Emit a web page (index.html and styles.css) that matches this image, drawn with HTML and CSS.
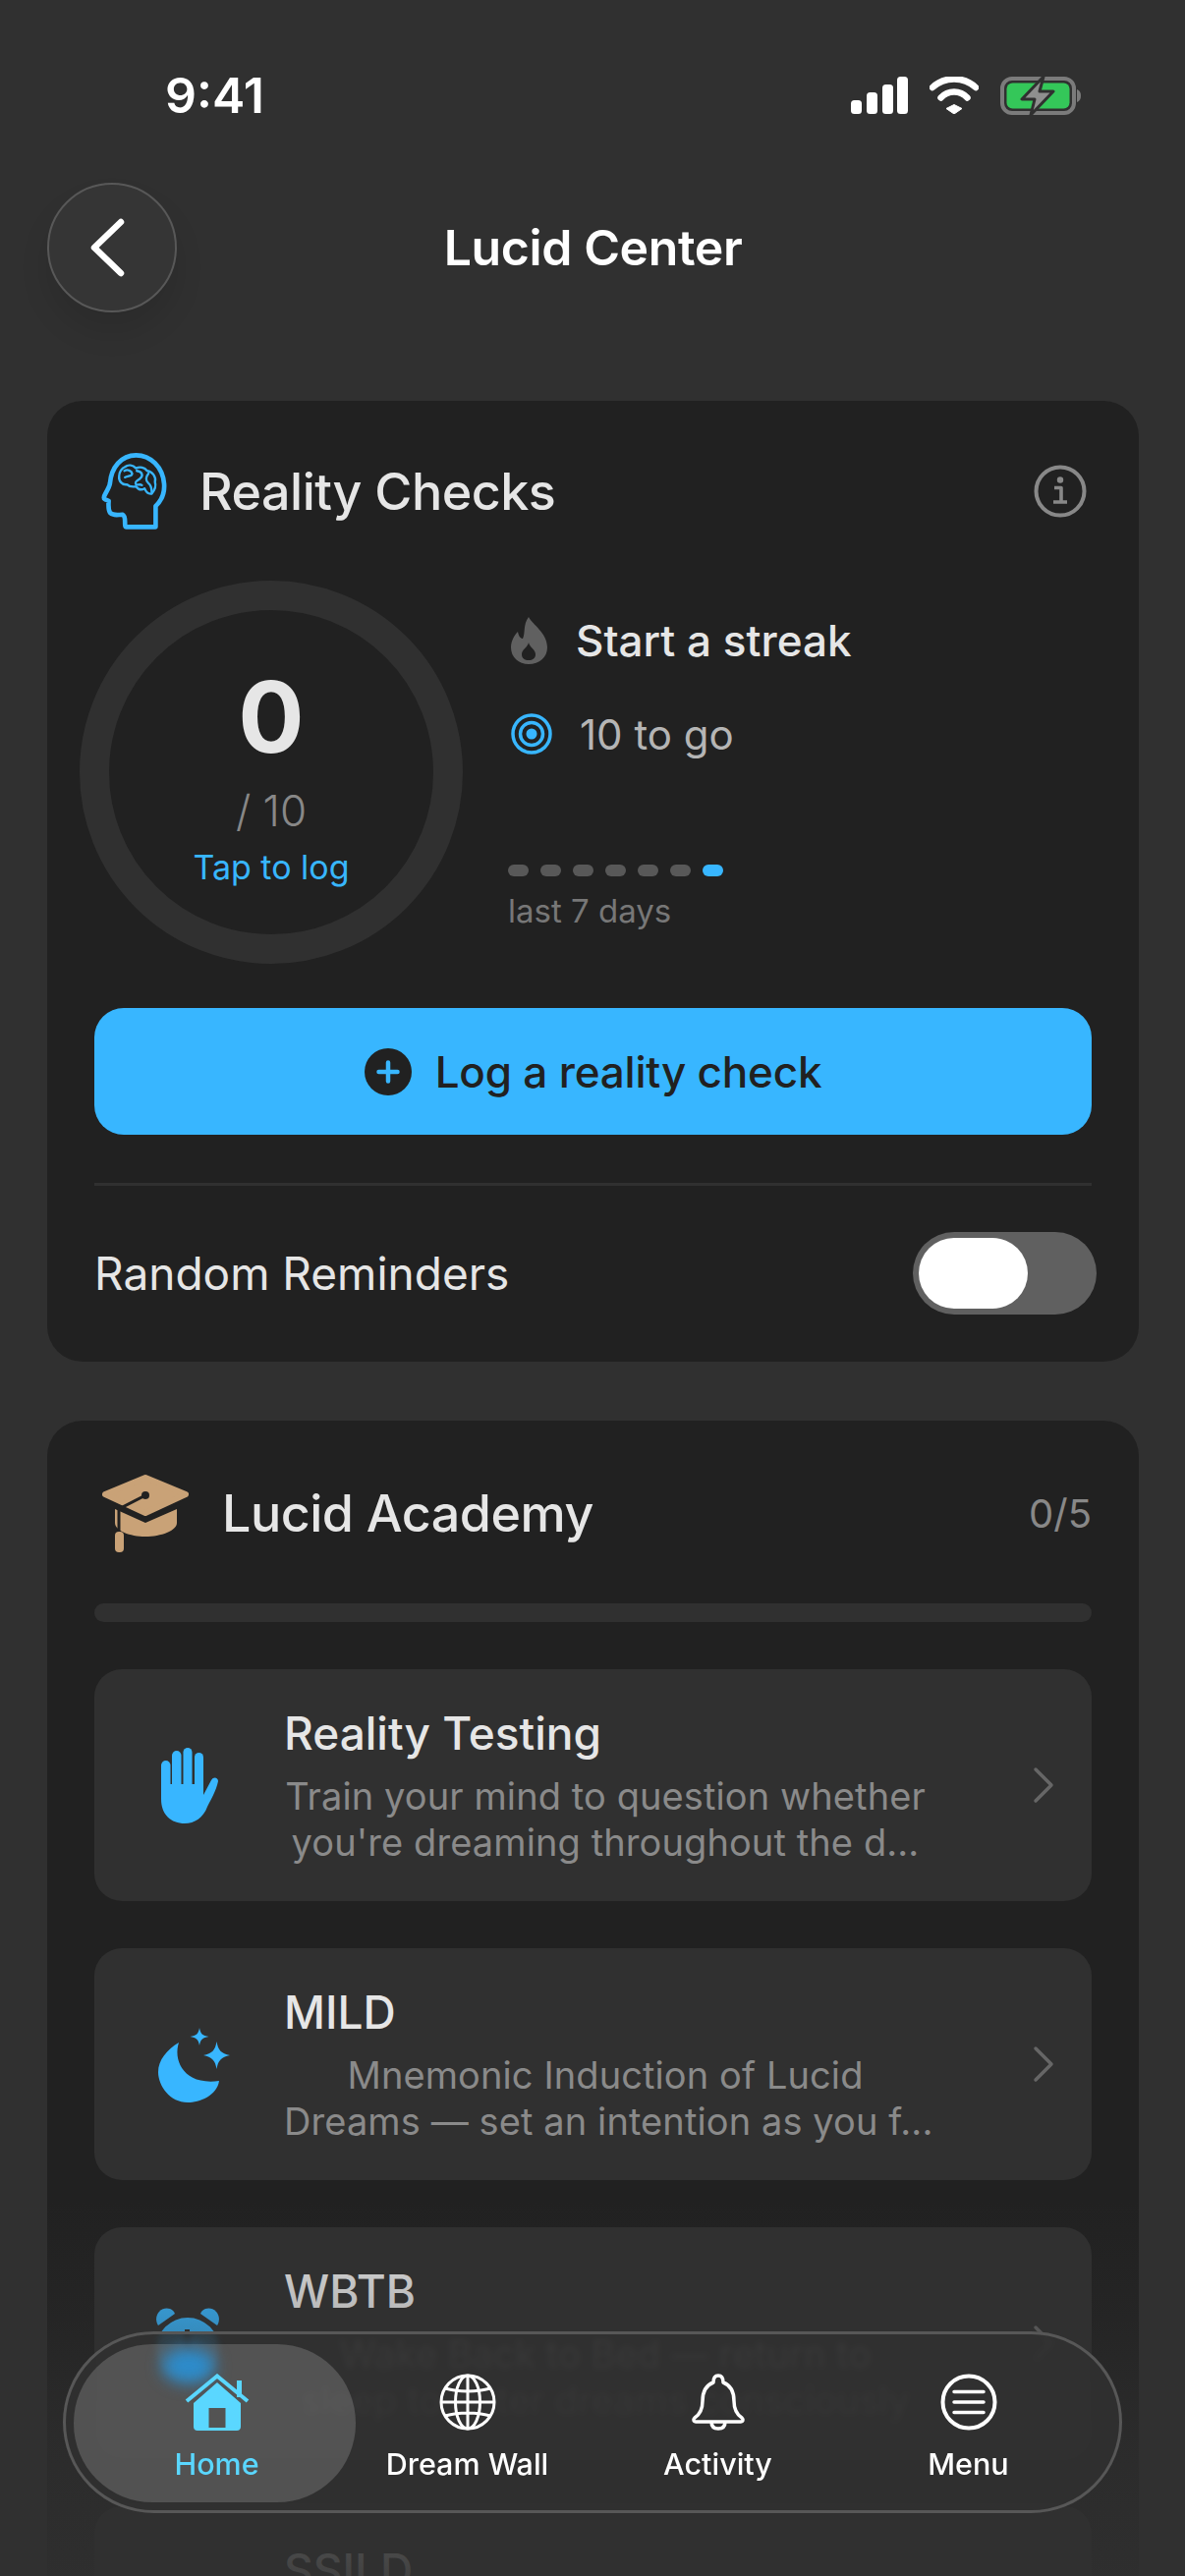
FILE: index.html
```html
<!DOCTYPE html>
<html lang="en">
<head>
    <meta charset="UTF-8">
    <meta name="viewport" content="width=device-width, initial-scale=1.0">
    <title>Lucid Center</title>
    <link rel="stylesheet" href="styles.css">
</head>
<body>
    <div class="screen">
        <div class="status">
            <span class="time">9:41</span>
            <div class="status-icons">
                <svg class="ic-signal" viewBox="0 0 58 38"><rect x="0" y="24" width="11" height="14" rx="3.5"/><rect x="16" y="16" width="11" height="22" rx="3.5"/><rect x="32" y="8" width="11" height="30" rx="3.5"/><rect x="47" y="0" width="11" height="38" rx="3.5"/></svg>
                <svg class="ic-wifi" viewBox="0 0 50 38"><path d="M25 28.5L33 32.500 25 38 17 32.500Z" stroke="#fff" stroke-width="1" stroke-linejoin="round"/><path d="M11.500 21.500C19 13.500 31 13.500 38.500 21.500" fill="none" stroke="#fff" stroke-width="6.500" stroke-linecap="round"/><path d="M3 11C15 -0.500 35 -0.500 47 11" fill="none" stroke="#fff" stroke-width="6.500" stroke-linecap="round"/></svg>
                <svg class="ic-battery" viewBox="0 0 82 41"><rect x="2" y="3" width="73" height="35" rx="10" fill="none" stroke="#7b7b7b" stroke-width="4"/><rect x="6.500" y="7.500" width="64" height="26" rx="6" fill="#34c759"/><path d="M78 14C81 15 82 17.500 82 20.500C82 23.500 81 26 78 27Z" fill="#7b7b7b"/><path d="M44 1L22 24H35L31 40L54 16H40Z" fill="#8f8f8f" stroke="#303030" stroke-width="3" stroke-linejoin="round"/></svg>
            </div>
        </div>

        <div class="topbar">
            <button class="back">
                <svg viewBox="0 0 36 60"><path d="M32 4L5 30L32 56" fill="none" stroke="#fff" stroke-width="6.500" stroke-linecap="round" stroke-linejoin="round"/></svg>
            </button>
            <h1 class="page-title">Lucid Center</h1>
        </div>

        <section class="card">
            <div class="card-head">
                <svg class="ic-brain" viewBox="40 35 200 235">
                    <path d="M116 262H206V198C225 180 234 158 232 130C228 78 190 42 146 42C100 42 70 80 66 128C65 136 60 146 52 160C46 170 46 176 52 178L62 182C61 196 61 210 66 218C72 226 84 226 104 224C110 226 112 236 112 248C112 256 112 262 116 262Z" fill="none" stroke="#38b6ff" stroke-width="14" stroke-linejoin="round"/>
                    <path d="M112 78C122 70 136 72 146 82C158 76 172 80 180 90C196 92 208 108 204 124C208 136 202 150 194 160C184 162 176 154 172 144C162 150 152 146 146 138C134 140 124 138 118 132C104 134 92 122 94 106C94 94 102 82 112 78Z" fill="none" stroke="#38b6ff" stroke-width="7" stroke-linejoin="round"/>
                    <path d="M110 90C120 84 132 90 134 98C134 108 120 104 112 110M148 90C164 92 170 104 158 114C150 120 140 122 146 132C152 134 158 130 164 134M184 98C176 108 174 120 184 128C192 134 194 146 194 156" fill="none" stroke="#38b6ff" stroke-width="7" stroke-linejoin="round" stroke-linecap="round"/>
                </svg>
                <h2 class="rc-title">Reality Checks</h2>
                <svg class="ic-info" viewBox="0 0 54 54"><circle cx="27" cy="27" r="24.500" fill="none" stroke="#888" stroke-width="4"/><circle cx="27" cy="15.500" r="3.200" fill="#888"/><path d="M21 23.500H28V37M20 38H34" fill="none" stroke="#888" stroke-width="3.600" stroke-linejoin="round"/></svg>
            </div>

            <div class="stats">
                <div class="ring">
                    <span class="ring-count">0</span>
                    <span class="ring-total">/ 10</span>
                    <span class="ring-tap">Tap to log</span>
                </div>
                <div class="stats-side">
                    <div class="streak">
                        <svg class="ic-flame" viewBox="0 0 37 48"><path fill-rule="evenodd" d="M18 0C22 8 37 16 37 31C37 41 29 48 18 48C8 48 0 41 0 31C0 24 4 18 7 15C8 20 10 22 12 22C15 16 12 8 18 0ZM18 26C19 31 25 33 25 38C25 42 22 44 18 44C14 44 11 42 11 38C11 33 17 31 18 26Z" fill="#606060"/></svg>
                        <span>Start a streak</span>
                    </div>
                    <div class="togo">
                        <svg class="ic-target" viewBox="0 0 42 42"><circle cx="21" cy="21" r="19" fill="none" stroke="#38b6ff" stroke-width="3.500"/><circle cx="21" cy="21" r="11.500" fill="none" stroke="#38b6ff" stroke-width="3.500"/><circle cx="21" cy="21" r="5.500" fill="#38b6ff"/></svg>
                        <span>10 to go</span>
                    </div>
                    <div class="days">
                        <i></i><i></i><i></i><i></i><i></i><i></i><i class="today"></i>
                    </div>
                    <div class="days-label">last 7 days</div>
                </div>
            </div>

            <button class="log-btn">
                <svg class="ic-plus" viewBox="0 0 48 48"><circle cx="24" cy="24" r="24" fill="#212121"/><path d="M24 14.500V33.500M14.500 24H33.500" stroke="#38b6ff" stroke-width="4.500" stroke-linecap="round"/></svg>
                <span>Log a reality check</span>
            </button>

            <div class="divider"></div>

            <div class="reminders">
                <span>Random Reminders</span>
                <div class="toggle"><div class="knob"></div></div>
            </div>
        </section>

        <section class="card academy">
            <div class="card-head">
                <svg class="ic-cap" viewBox="0 0 88 80">
                    <path d="M13 36L44 50L76 36V50C76 58 60 64 44 64C28 64 13 58 13 50Z" fill="#c9a277"/>
                    <path d="M44 4L85 21L44 40L3 21Z" fill="#c9a277" stroke="#c9a277" stroke-width="6" stroke-linejoin="round"/>
                    <path d="M11 32L44 47L79 32" fill="none" stroke="#212121" stroke-width="3.500"/>
                    <path d="M44 22L17 36V60" fill="none" stroke="#212121" stroke-width="3"/>
                    <circle cx="44" cy="22" r="4" fill="#212121"/>
                    <rect x="13" y="59" width="9" height="21" rx="4" fill="#c9a277"/>
                </svg>
                <h2 class="academy-title">Lucid Academy</h2>
                <span class="academy-count">0/5</span>
            </div>
            <div class="progress"></div>

            <div class="lessons">
                <div class="lesson">
                    <div class="lesson-icon">
                        <svg class="ic-hand" viewBox="0 0 58 77" fill="#38b6ff"><rect x="0" y="13" width="9.500" height="32" rx="4.750"/><rect x="11" y="3" width="9.500" height="42" rx="4.750"/><rect x="22.500" y="0" width="9" height="45" rx="4.500"/><rect x="34" y="5" width="9" height="40" rx="4.500"/><path d="M0 37H43V48L51 33C53 29 58 30 58 34C56 44 50 54 47 60C43 71 34 77 24 77C10 77 0 68 0 52Z"/></svg>
                    </div>
                    <div class="lesson-text">
                        <div class="lesson-title">Reality Testing</div>
                        <p class="lesson-desc">Train your mind to question whether<br>you're dreaming throughout the d...</p>
                    </div>
                    <svg class="ic-chev" viewBox="0 0 22 38"><path d="M3 3L19 19L3 35" fill="none" stroke="#666" stroke-width="3.500" stroke-linecap="round" stroke-linejoin="round"/></svg>
                </div>

                <div class="lesson">
                    <div class="lesson-icon">
                        <svg class="ic-moon" viewBox="0 0 75 80" fill="#38b6ff"><path d="M21 18C15 36 26 62 62 57C60 72 42 79 30 79C12 79 0 62 0 48C0 36 9 25 21 18Z"/><path d="M42 3C43 9 45 11 51.500 12C45 13 43 15 42 21C41 15 39 13 32.500 12C39 11 41 9 42 3Z"/><path d="M59.500 17C61 26 64 29 73 31C64 33 61 36 59.500 45C58 36 55 33 46 31C55 29 58 26 59.500 17Z"/></svg>
                    </div>
                    <div class="lesson-text">
                        <div class="lesson-title">MILD</div>
                        <p class="lesson-desc">Mnemonic Induction of Lucid<br>Dreams — set an intention as you f...</p>
                    </div>
                    <svg class="ic-chev" viewBox="0 0 22 38"><path d="M3 3L19 19L3 35" fill="none" stroke="#666" stroke-width="3.500" stroke-linecap="round" stroke-linejoin="round"/></svg>
                </div>

                <div class="lesson">
                    <div class="lesson-icon">
                        <svg class="ic-alarm" viewBox="0 0 66 76" fill="#38b6ff"><path d="M3 20C-3 10 6 0 15 3C18 4 19 6 20 8Z"/><path d="M63 20C69 10 60 0 51 3C48 4 47 6 46 8Z"/><path fill-rule="evenodd" d="M33 12A32 32 0 1 1 33 76A32 32 0 1 1 33 12ZM30 24V46L44 54L46 50L35 43V24Z"/></svg>
                    </div>
                    <div class="lesson-text">
                        <div class="lesson-title">WBTB</div>
                        <p class="lesson-desc">Wake Back to Bed — return to<br>sleep to enter dreams consciously</p>
                    </div>
                    <svg class="ic-chev" viewBox="0 0 22 38"><path d="M3 3L19 19L3 35" fill="none" stroke="#666" stroke-width="3.500" stroke-linecap="round" stroke-linejoin="round"/></svg>
                </div>

                <div class="lesson">
                    <div class="lesson-text">
                        <div class="lesson-title">SSILD</div>
                    </div>
                </div>
            </div>
        </section>

        <div class="fade"></div>

        <nav class="tabbar">
            <div class="tab-pill"></div>
            <div class="tab-glow"></div>
            <a class="tab active">
                <svg viewBox="0 0 66 58"><path fill="#5ad7ff" fill-rule="evenodd" d="M33 9L57 30V54C57 56.500 55.500 58 53 58H13C10.500 58 9 56.500 9 54V30ZM24.500 35V55H41.500V35Z"/><path d="M2 28L33 2.500L64 28" fill="none" stroke="#5ad7ff" stroke-width="4"/><rect x="53" y="7" width="5" height="17" fill="#5ad7ff"/></svg>
                <span>Home</span>
            </a>
            <a class="tab">
                <svg viewBox="0 0 58 58" fill="none" stroke="#fff" stroke-width="3"><circle cx="29" cy="29" r="27"/><ellipse cx="29" cy="29" rx="12.500" ry="27"/><path d="M29 2V56M2 29H56M6 15C20 19 38 19 52 15M6 43C20 39 38 39 52 43"/></svg>
                <span>Dream Wall</span>
            </a>
            <a class="tab">
                <svg viewBox="0 0 56 58" fill="none" stroke="#fff" stroke-width="3.500" stroke-linejoin="round"><path d="M28 2C32 2 33 6 33 9C41 12 44 20 44 28C44 36 46 41 52 45C54 47 53 49 51 49H5C3 49 2 47 4 45C10 41 12 36 12 28C12 20 15 12 23 9C23 6 24 2 28 2Z"/><path d="M21 49C21 54 24 56 28 56C32 56 35 54 35 49"/></svg>
                <span>Activity</span>
            </a>
            <a class="tab">
                <svg viewBox="0 0 58 58" fill="none" stroke="#fff" stroke-width="4"><circle cx="29" cy="29" r="26.500"/><path d="M14 18.500H44M14 29H44M14 39.500H44" stroke-width="3.500" stroke-linecap="round"/></svg>
                <span>Menu</span>
            </a>
        </nav>
    </div>
</body>
</html>
```

FILE: styles.css
```css
* {
    box-sizing: border-box;
}
body {
    margin: 0;
    background-color: #303030;
    font-family: Inter, "Noto Sans", sans-serif;
}
.screen {
    position: relative;
    width: 1206px;
    height: 2622px;
    overflow: hidden;
    padding: 0 47px 0 48px;
    background-color: #303030;
}
h1, h2, p {
    margin: 0;
    font-weight: 500;
}

/* status bar */
.status {
    display: flex;
    align-items: center;
    justify-content: space-between;
    height: 60px;
    margin: 67px 0 59px;
    padding: 0 59px 0 120px;
}
.time {
    color: #fff;
    font-size: 50px;
    font-weight: 600;
}
.status-icons {
    display: flex;
    align-items: center;
    gap: 22px;
}
.ic-signal { width: 58px; height: 38px; fill: #fff; }
.ic-wifi { width: 50px; height: 38px; fill: #fff; }
.ic-battery { width: 82px; height: 41px; }

/* header */
.topbar {
    position: relative;
    display: flex;
    justify-content: center;
    align-items: center;
    height: 132px;
    margin-bottom: 90px;
}
.back {
    position: absolute;
    left: 0;
    top: 0;
    display: flex;
    align-items: center;
    justify-content: center;
    width: 132px;
    height: 132px;
    padding: 0 10px 0 0;
    border: 2px solid #585858;
    border-radius: 50%;
    background: #353535;
    box-shadow: 0 20px 30px rgba(0, 0, 0, 0.1);
}
.back svg {
    width: 36px;
    height: 60px;
}
.page-title {
    color: #fff;
    font-size: 50px;
    font-weight: 600;
    letter-spacing: -0.4px;
}

/* cards */
.card {
    padding: 46px 48px 48px;
    border-radius: 36px;
    background: #212121;
}
.card-head {
    display: flex;
    align-items: center;
    height: 92px;
}
.ic-brain {
    width: 67px;
    height: 78px;
    margin-left: 7px;
}
.rc-title {
    margin-left: 33px;
    color: #e6e6e6;
    font-size: 52px;
    letter-spacing: -0.5px;
}
.ic-info {
    width: 54px;
    height: 54px;
    margin-left: auto;
    margin-right: 5px;
}

.stats {
    display: flex;
    margin: 45px 0 0 -15px;
}
.ring {
    display: flex;
    flex-direction: column;
    align-items: center;
    flex: none;
    width: 390px;
    height: 390px;
    padding-top: 54px;
    border: 30px solid #303030;
    border-radius: 50%;
}
.ring-count {
    color: #e6e6e6;
    font-size: 100px;
    font-weight: 700;
    line-height: 110px;
}
.ring-total {
    margin-top: 15px;
    color: #888;
    font-size: 44px;
    font-weight: 300;
    line-height: 50px;
}
.ring-tap {
    margin-top: 11px;
    color: #38b6ff;
    font-size: 34px;
    line-height: 44px;
}
.stats-side {
    margin-left: 46px;
    padding-top: 31px;
}
.streak, .togo {
    display: flex;
    align-items: center;
    height: 60px;
}
.streak {
    padding-left: 3px;
    color: #e6e6e6;
    font-size: 44px;
    font-weight: 500;
}
.ic-flame {
    width: 37px;
    height: 48px;
    margin-right: 29px;
}
.togo {
    margin-top: 35px;
    padding-left: 3px;
    color: #b5b5b5;
    font-size: 42px;
}
.ic-target {
    width: 42px;
    height: 42px;
    margin-right: 28px;
}
.days {
    display: flex;
    gap: 12px;
    margin-top: 103px;
}
.days i {
    width: 21px;
    height: 12px;
    border-radius: 6px;
    background: #585858;
}
.days .today {
    background: #38b6ff;
}
.days-label {
    margin-top: 14px;
    color: #777;
    font-size: 33px;
    line-height: 42px;
}

.log-btn {
    display: flex;
    align-items: center;
    justify-content: center;
    gap: 24px;
    width: 100%;
    height: 129px;
    margin-top: 45px;
    border: none;
    border-radius: 30px;
    background: #38b6ff;
    color: #212121;
    font-family: inherit;
    font-size: 44px;
    font-weight: 500;
    letter-spacing: -0.2px;
}
.ic-plus {
    width: 48px;
    height: 48px;
}
.divider {
    height: 3px;
    margin-top: 49px;
    background: #303030;
}
.reminders {
    display: flex;
    align-items: center;
    justify-content: space-between;
    height: 84px;
    margin: 47px -5px 0 0;
    color: #e6e6e6;
    font-size: 46px;
}
.toggle {
    width: 187px;
    height: 84px;
    padding: 6px;
    border-radius: 42px;
    background: #606060;
}
.knob {
    width: 111px;
    height: 72px;
    border-radius: 36px;
    background: #fff;
}

/* academy */
.academy {
    margin-top: 60px;
    padding-top: 48px;
}
.ic-cap {
    width: 88px;
    height: 80px;
    margin-left: 8px;
}
.academy-title {
    margin-left: 34px;
    color: #e6e6e6;
    font-size: 52px;
    letter-spacing: -0.5px;
}
.academy-count {
    margin-left: auto;
    color: #888;
    font-size: 40px;
}
.progress {
    height: 19px;
    margin-top: 46px;
    border-radius: 10px;
    background: #303030;
}
.lessons {
    display: flex;
    flex-direction: column;
    gap: 48px;
    margin-top: 48px;
}
.lesson {
    display: flex;
    align-items: center;
    flex: none;
    height: 236px;
    padding-right: 38px;
    border-radius: 28px;
    background: #303030;
}
.lesson-icon {
    display: flex;
    justify-content: center;
    flex: none;
    width: 190px;
}
.lesson-text {
    align-self: flex-start;
    width: 654px;
    margin-left: 3px;
    padding-top: 37px;
}
.lesson:last-child .lesson-text {
    margin-left: 193px;
}
.lesson-title {
    color: #e6e6e6;
    font-size: 46px;
    font-weight: 500;
    line-height: 56px;
}
.lesson-desc {
    margin-top: 13px;
    color: #8a8a8a;
    font-size: 38px;
    font-weight: 400;
    letter-spacing: 0.1px;
    line-height: 47px;
    text-align: center;
    white-space: nowrap;
}
.ic-hand { width: 58px; height: 77px; margin-left: 3px; }
.ic-moon { width: 75px; height: 80px; margin-left: 14px; }
.ic-alarm { width: 66px; height: 76px; }
.ic-chev {
    width: 22px;
    height: 38px;
    margin-left: auto;
}

/* bottom fade and tab bar */
.fade {
    position: absolute;
    left: 0;
    right: 0;
    bottom: 0;
    height: 382px;
    background: linear-gradient(rgba(48, 48, 48, 0), rgba(48, 48, 48, 0.25) 30%, rgba(48, 48, 48, 0.7) 65%, rgba(48, 48, 48, 0.9));
}
.tabbar {
    position: absolute;
    left: 64px;
    top: 2373px;
    display: grid;
    grid-template-columns: repeat(4, 255px);
    width: 1078px;
    height: 185px;
    padding: 40px 0 0 26px;
    border: 3px solid #575757;
    border-radius: 93px;
    background: rgba(48, 48, 48, 0.85);
    backdrop-filter: blur(3px);
}
.tab-pill {
    position: absolute;
    left: 8px;
    top: 10px;
    width: 287px;
    height: 161px;
    border-radius: 80px;
    background: rgba(255, 255, 255, 0.17);
}
.tab-glow {
    position: absolute;
    left: 98px;
    top: 14px;
    width: 54px;
    height: 36px;
    border-radius: 50%;
    background: #2d8ccb;
    filter: blur(8px);
}
.tab {
    position: relative;
    display: flex;
    flex-direction: column;
    align-items: center;
    gap: 14px;
    color: #fff;
    font-size: 30.500px;
    font-weight: 500;
    line-height: 40px;
}
.tab svg {
    height: 58px;
}
.tab.active {
    color: #5ad7ff;
}
```
